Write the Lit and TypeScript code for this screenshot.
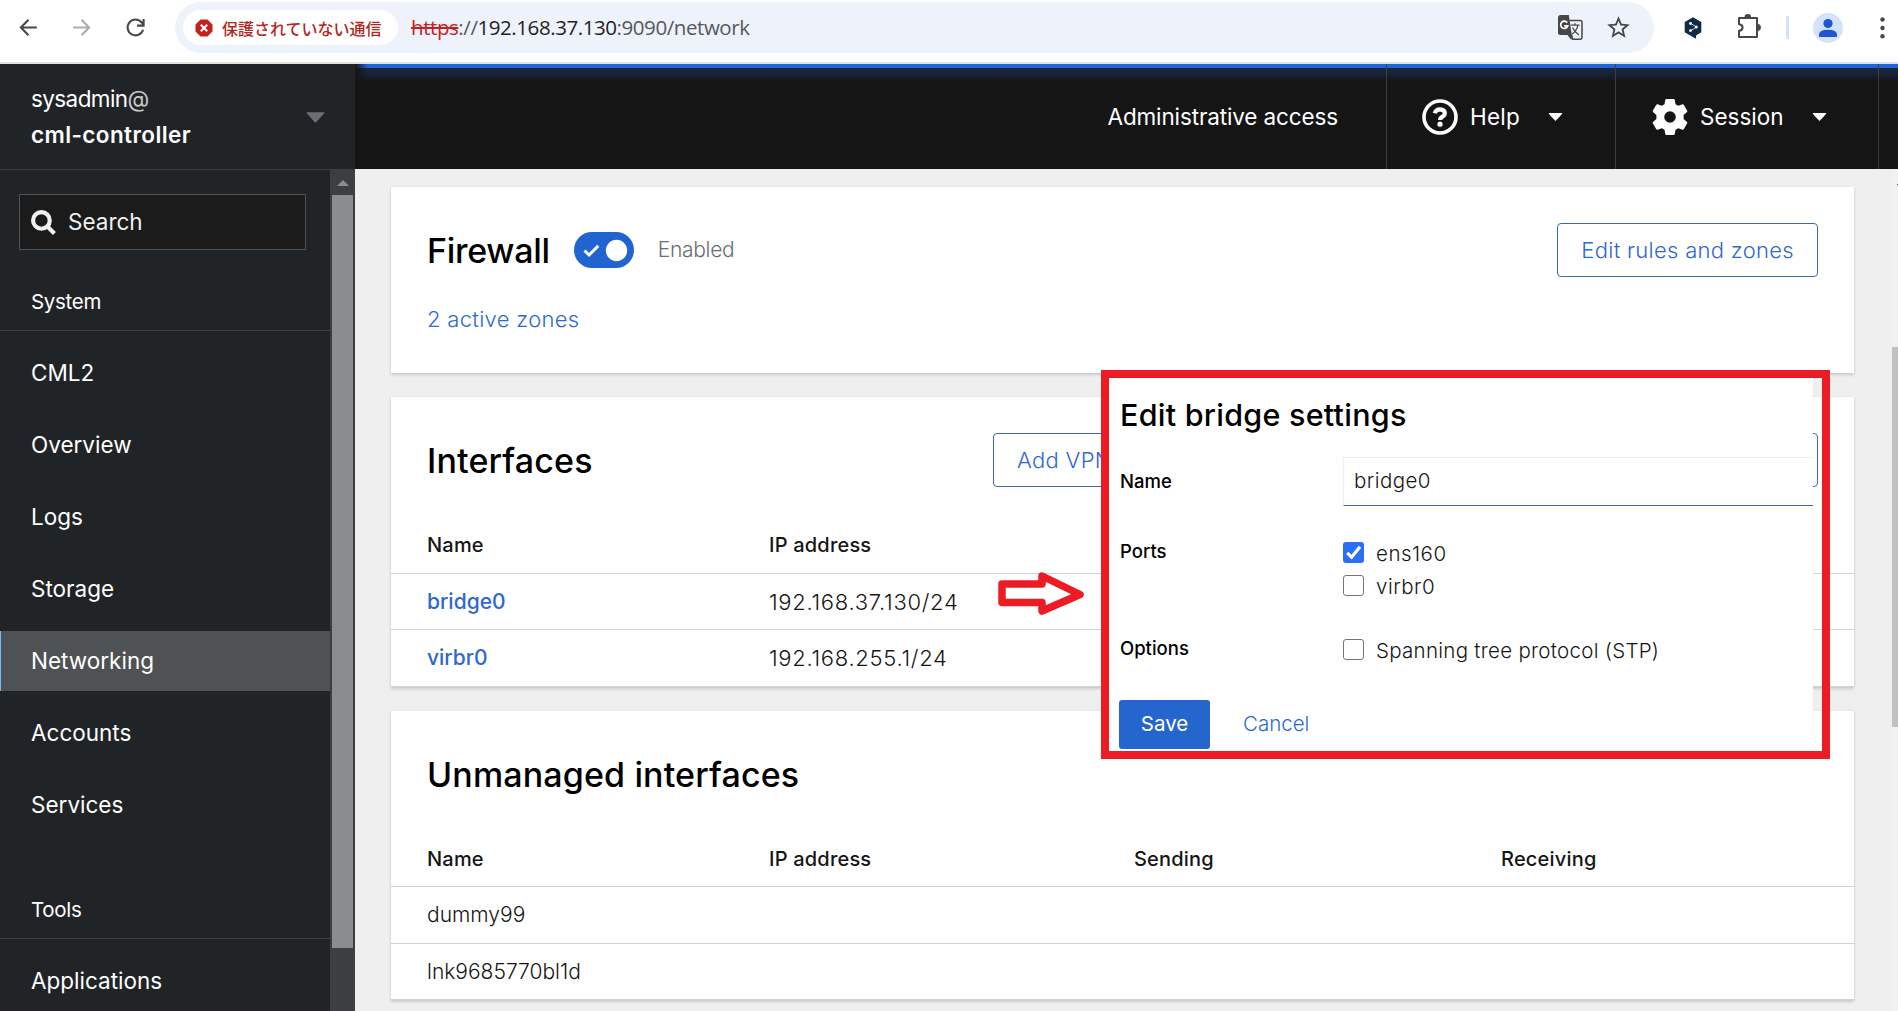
import { LitElement, css, html, svg } from 'lit';
import { customElement, property } from 'lit/decorators.js';
import { classMap } from 'lit/directives/class-map.js';


const caret = svg`<svg class="caret" viewBox="0 0 16 9"><path fill="currentColor" d="M1 0h14q1 0 .4 1L8.6 8.4q-.6.6-1.200 0L.6 1Q0 0 1 0z"/></svg>`;

@customElement( 'browser-bar' )
export class BrowserBar extends LitElement {
   render() {
      return html`
      <svg class="nav back" viewBox="0 0 24 24"><path d="M20 12H5M12 4.500 4.700 12l7.300 7.500"/></svg>
      <svg class="nav forward" viewBox="0 0 24 24"><path d="M4 12h15M12 4.500l7.300 7.500-7.300 7.500"/></svg>
      <svg class="nav reload" viewBox="0 0 24 24"><path d="M19.300 14.200A7.600 7.600 0 1 1 18 7.200l1.500 2.300M19.800 3.800v6.400h-6.400"/></svg>
      <div class="address">
        <div class="chip">
          <svg viewBox="0 0 18 18" width="18" height="18">
            <path fill="#c5221f" d="M5.600.500h6.800l5.100 5.100v6.800l-5.100 5.100H5.600L.500 12.400V5.600z"/>
            <path stroke="#fff" stroke-width="2" d="M5.800 5.800l6.400 6.400M12.200 5.800l-6.400 6.400"/>
          </svg>
          <span>保護されていない通信</span>
        </div>
        <div class="url"><s>https</s>://<b>192.168.37.130</b>:9090/network</div>
        <svg class="translate" viewBox="0 0 26 26">
          <path fill="#474747" d="M2.500 0h8.300l3 20H2.500Q0 20 0 17.500v-15Q0 0 2.500 0z"/>
          <path fill="none" stroke="#474747" stroke-width="1.500" d="M11.500 5.500h10.800q1.700 0 1.700 1.700v15.300q0 1.700-1.700 1.700h-7.500l-1.500-4.500"/>
          <path fill="#474747" d="M9.500 20h5l-1.200 5z"/>
          <path fill="none" stroke="#fff" stroke-width="1.700" d="M9.200 7.700a3.600 3.600 0 1 0 .5 3.200H6.200"/>
          <path fill="none" stroke="#474747" stroke-width="1.300" d="M12.700 10.200h8.800M17 8.200v2M20 10.200q-1.500 6-6 8.800M14.500 12.500q2 4.500 6.500 7.500"/>
        </svg>
        <svg class="star" viewBox="0 0 24 24"><path fill="#474747" d="M22 9.240l-7.190-.620L12 2 9.190 8.630 2 9.240l5.460 4.730L5.820 21 12 17.270 18.180 21l-1.630-7.030L22 9.240zM12 15.400l-3.760 2.270 1-4.280-3.320-2.880 4.380-.380L12 6.100l1.710 4.040 4.380.380-3.320 2.880 1 4.280L12 15.400z"/></svg>
      </div>
      <svg class="hex" viewBox="0 0 18 22">
        <path fill="#0f2b46" d="M9 .300 17.300 5v10.300L12 18.500v3.200L8 19.600.700 15.300V5z"/>
        <path fill="none" stroke="#fff" stroke-width=".8" d="M6.500 6.300l6 3.700-6 3.700"/>
        <circle cx="6.500" cy="6.500" r="1.400" fill="#fff"/><circle cx="12.300" cy="10" r="1.500" fill="#fff"/><circle cx="6.500" cy="13.600" r="1.400" fill="#fff"/>
      </svg>
      <svg class="puzzle" viewBox="0 0 24 25">
        <path fill="none" stroke="#474747" stroke-width="2" stroke-linejoin="round" d="M2 4h18v19H2v-6.200q3.600-.300 3.600-3.300T2 10.200z"/>
        <path fill="#474747" d="M7.500 3.300a3.300 3.300 0 0 1 6.600 0zM20.500 10.100a3.400 3.400 0 0 1 0 6.800z"/>
      </svg>
      <div class="divider"></div>
      <svg class="avatar" viewBox="0 0 30 30">
        <circle cx="15" cy="15" r="15" fill="#d3e3fd"/>
        <circle cx="15" cy="10.500" r="4.600" fill="#1f55cf"/>
        <path fill="#1f55cf" d="M6 24v-2.500q0-4.700 9-4.700t9 4.700V24z"/>
      </svg>
      <svg class="dots" viewBox="0 0 5 22"><g fill="#474747"><circle cx="2.500" cy="2.500" r="2.200"/><circle cx="2.500" cy="11" r="2.200"/><circle cx="2.500" cy="19.300" r="2.200"/></g></svg>
    `;
   }

   static styles = css`
  :host {
    display: flex;
    align-items: center;
    height: 64px;
    box-sizing: border-box;
    padding: 0 0 7px 16px;
    border-bottom: 2px solid #e2e4dc;
    background: #fff;
  }
  svg {
    flex: none;
  }
  .nav {
    width: 25px;
    height: 25px;
    fill: none;
    stroke: #474747;
    stroke-width: 2;
  }
  .forward {
    margin-left: 28px;
    stroke: #acacac;
  }
  .reload {
    margin-left: 29px;
  }
  .address {
    display: flex;
    align-items: center;
    width: 1479px;
    height: 51px;
    box-sizing: border-box;
    padding: 0 22px 0 8px;
    margin-left: 27px;
    border-radius: 26px;
    background: #eef2fb;
  }
  .chip {
    display: flex;
    align-items: center;
    gap: 9px;
    width: 215px;
    height: 35px;
    box-sizing: border-box;
    padding-left: 12px;
    border-radius: 18px;
    background: #fff;
    color: #b3261e;
    font: 500 16px/24px "Noto Sans CJK JP", sans-serif;
    white-space: nowrap;
  }
  .url {
    flex: 1;
    padding: 0 0 2px 13px;
    color: #55585c;
    font: 20.5px/30px "Open Sans", sans-serif;
    letter-spacing: -0.43px;
    white-space: nowrap;
  }
  .url s {
    color: #c5221f;
  }
  .url b {
    color: #1f1f1f;
    font-weight: 400;
  }
  .translate {
    width: 26px;
    height: 26px;
    margin-right: 21px;
  }
  .star {
    width: 27px;
    height: 27px;
  }
  .hex {
    width: 18px;
    height: 22px;
    margin-left: 30px;
  }
  .puzzle {
    width: 24px;
    height: 25px;
    margin: 0 0 3px 35px;
  }
  .divider {
    width: 3px;
    height: 23px;
    margin-left: 25px;
    background: #d3e3fd;
  }
  .avatar {
    width: 30px;
    height: 30px;
    margin-left: 24px;
  }
  .dots {
    width: 5px;
    height: 22px;
    margin-left: 37px;
  }
  `;
}


@customElement( 'side-nav' )
export class SideNav extends LitElement {
   @property( { type: String } ) current = 'Networking';

   groups = [
      { title: 'System', items: [ 'CML2', 'Overview', 'Logs', 'Storage', 'Networking', 'Accounts', 'Services' ] },
      { title: 'Tools', items: [ 'Applications' ] }
   ];

   render() {
      return html`
      <div class="host">
        <div>
          <div class="user">sysadmin<span>@</span></div>
          <div class="machine">cml-controller</div>
        </div>
        ${ caret }
      </div>
      <div class="body">
        <div class="list">
          <div class="search">
            <svg viewBox="0 0 24 24"><circle cx="10" cy="10" r="8" /><path d="M16 16l6.500 6.500"/></svg>
            <span>Search</span>
          </div>
          ${ this.groups.map( group => html`
            <section>
              <h2>${ group.title }</h2>
              ${ group.items.map( item => html`
                <div class=${ classMap( { item: true, current: item === this.current } ) }>${ item }</div>
              ` ) }
            </section>
          ` ) }
        </div>
        <div class="scrollbar">
          <div class="up"></div>
          <div class="thumb"></div>
        </div>
      </div>
    `;
   }

   static styles = css`
  :host {
    display: flex;
    flex-direction: column;
    width: 355px;
    background: #212427;
    color: #fff;
    font: 22.5px/30px Inter, sans-serif;
  }
  .host {
    display: flex;
    align-items: center;
    justify-content: space-between;
    height: 106px;
    box-sizing: border-box;
    padding: 1px 30px 0 31px;
    border-bottom: 1px solid #3c3f42;
  }
  .user, .machine {
    line-height: 36px;
  }
  .user {
    letter-spacing: -0.6px;
  }
  .user span {
    color: #c8c9ca;
  }
  .machine {
    font-weight: 600;
    letter-spacing: 0.4px;
  }
  .caret {
    width: 19px;
    height: 11px;
    color: #6a6e73;
  }
  .body {
    display: flex;
    flex: 1;
    min-height: 0;
  }
  .list {
    width: 330px;
    overflow: hidden;
  }
  .search {
    display: flex;
    align-items: center;
    gap: 12px;
    width: 287px;
    height: 56px;
    box-sizing: border-box;
    margin: 24px 0 0 19px;
    padding-left: 11px;
    border: 1px solid #4f5255;
    background: #1b1b1b;
    color: #f0f0f0;
  }
  .search svg {
    width: 25px;
    height: 25px;
    fill: none;
    stroke: #f0f0f0;
    stroke-width: 4;
  }
  section {
    display: flex;
    flex-direction: column;
    gap: 12px;
  }
  h2 {
    height: 81px;
    box-sizing: border-box;
    margin: 0;
    padding: 37px 0 0 31px;
    border-bottom: 1px solid #3c3f42;
    font-size: 20.500px;
    font-weight: 400;
    letter-spacing: -0.3px;
  }
  section + section {
    margin-top: 23px;
  }
  .item {
    height: 60px;
    box-sizing: border-box;
    padding: 15px 0 0 31px;
  }
  .item.current {
    padding-left: 30px;
    border-left: 1px solid #73bcf7;
    background: #4f5255;
  }
  .scrollbar {
    width: 21px;
    padding: 0 2px;
    background: #3c3f42;
  }
  .up {
    width: 0;
    margin: 10px 5px 9px;
    border: 6px solid transparent;
    border-top: 0;
    border-bottom-color: #8a8d90;
  }
  .thumb {
    height: 753px;
    background: #8a8d90;
  }
  `;
}


@customElement( 'top-bar' )
export class TopBar extends LitElement {
   render() {
      return html`
      <div class="cell access">Administrative access</div>
      <div class="cell help">
        <svg class="icon" viewBox="0 0 36 36">
          <circle cx="18" cy="18" r="16" fill="none" stroke="#fff" stroke-width="3.600"/>
          <path fill="none" stroke="#fff" stroke-width="4.200" d="M12.800 14.300q1-4 5.200-4 4.800.2 4.800 3.900 0 2.200-2.600 3.600-2.200 1.200-2.200 3.200"/>
          <circle cx="18" cy="25.200" r="2.600" fill="#fff"/>
        </svg>
        <span>Help</span>
        ${ caret }
      </div>
      <div class="cell session">
        <svg class="icon" viewBox="0 0 36 36">
          <path fill="#fff" fill-rule="evenodd" d="M14.300 0h7.400q.8 0 1 .8l.8 4.400 2.800 1.600 4.200-1.500q.8-.2 1.200.4l3.500 6.100q.4.800-.2 1.300l-3.400 2.900v4l3.400 2.900q.6.500.2 1.300l-3.500 6.100q-.4.700-1.200.4l-4.200-1.500-2.800 1.600-.8 4.400q-.2.800-1 .8h-7.400q-.8 0-1-.8l-.8-4.400-2.800-1.600-4.200 1.500q-.8.300-1.200-.4l-3.500-6.100q-.4-.8.200-1.300l3.400-2.900v-4L1 13.100q-.6-.5-.2-1.300l3.500-6.100q.4-.6 1.200-.4l4.200 1.500 2.800-1.600.8-4.400q.2-.8 1-.8zM18 12.200a5.800 5.800 0 1 0 0 11.600 5.800 5.800 0 0 0 0-11.600z"/>
        </svg>
        <span>Session</span>
        ${ caret }
      </div>
    `;
   }

   static styles = css`
  :host {
    display: flex;
    justify-content: flex-end;
    height: 105px;
    box-sizing: border-box;
    padding-right: 19px;
    background:
      linear-gradient(to right, #151515, transparent) 0 0 / 13px 17px no-repeat,
      linear-gradient(#2065d8 0 4px, #192740 4px, #18202f 12px, #151515 17px);
    color: #fff;
    font: 22.5px/30px Inter, sans-serif;
  }
  .cell {
    display: flex;
    align-items: center;
    box-sizing: border-box;
    border-right: 1px solid #3c3f42;
  }
  .access {
    padding-right: 48px;
    letter-spacing: -0.13px;
  }
  .help {
    width: 229px;
    padding-left: 35px;
    letter-spacing: 0.2px;
  }
  .session {
    width: 263px;
    padding-left: 36px;
  }
  .icon {
    width: 36px;
    height: 36px;
    margin-right: 12px;
  }
  .caret {
    width: 15px;
    height: 8px;
    margin-left: 28px;
  }
  `;
}


@customElement( 'network-page' )
export class NetworkPage extends LitElement {
   interfaces = [
      { name: 'bridge0', ip: '192.168.37.130/24' },
      { name: 'virbr0', ip: '192.168.255.1/24' }
   ];
   unmanaged = [ 'dummy99', 'lnk9685770bl1d' ];

   render() {
      return html`
      <div class="card firewall">
        <div class="head">
          <h1>Firewall</h1>
          <svg class="switch" viewBox="0 0 60 36">
            <rect width="60" height="36" rx="18" fill="#2264cf"/>
            <path fill="none" stroke="#fff" stroke-width="3" d="M10.500 18.500l4.600 4.500 9.200-9.200"/>
            <circle cx="42.500" cy="18.500" r="10.700" fill="#fff"/>
          </svg>
          <span class="state">Enabled</span>
          <div class="actions"><div class="button">Edit rules and zones</div></div>
        </div>
        <div class="zones">2 active zones</div>
      </div>
      <div class="card">
        <div class="head">
          <h1>Interfaces</h1>
          <div class="actions wide">
            <div class="button">Add VPN</div>
            <div class="button">Add VLAN</div>
          </div>
        </div>
        <div class="row th"><span>Name</span><span>IP address</span></div>
        ${ this.interfaces.map( i => html`
          <div class="row"><span class="link">${ i.name }</span><span class="ip">${ i.ip }</span></div>
        ` ) }
      </div>
      <div class="card">
        <div class="head"><h1>Unmanaged interfaces</h1></div>
        <div class="row th"><span>Name</span><span>IP address</span><span>Sending</span><span>Receiving</span></div>
        ${ this.unmanaged.map( name => html`<div class="row"><span>${ name }</span></div>` ) }
      </div>
    `;
   }

   static styles = css`
  :host {
    display: flex;
    flex-direction: column;
    gap: 24px;
    box-sizing: border-box;
    width: 1537px;
    padding: 18px 38px 0 36px;
    background: #efefef;
    color: #151515;
    font: 300 21px/30px Inter, sans-serif;
  }
  .card {
    box-sizing: border-box;
    background: #fff;
    box-shadow: 0 2px 3px rgba(3,3,3,0.14), 0 0 3px rgba(3,3,3,0.06);
  }
  .firewall {
    height: 186px;
  }
  .head {
    display: flex;
    align-items: center;
    height: 120px;
    box-sizing: border-box;
    padding: 6px 36px 0;
  }
  h1 {
    margin: 0;
    padding-top: 2px;
    color: #000;
    font: 500 34px/44px Inter, sans-serif;
    letter-spacing: 0.14px;
  }
  .firewall h1 {
    letter-spacing: -0.3px;
  }
  .switch {
    width: 60px;
    height: 36px;
    margin: 0 24px;
  }
  .state {
    color: #6a6e73;
    letter-spacing: -0.3px;
  }
  .actions {
    display: flex;
    justify-content: space-between;
    margin-left: auto;
  }
  .wide {
    width: 825px;
  }
  .button {
    height: 54px;
    box-sizing: border-box;
    padding: 11px 23px;
    border: 1px solid #3f65b8;
    border-radius: 4px;
    color: #2f68d0;
    font-size: 22px;
    letter-spacing: 0.3px;
  }
  .zones {
    margin: -3px 0 0 36px;
    color: #2f68d0;
    font-size: 22px;
    letter-spacing: 0.3px;
  }
  .row {
    display: grid;
    grid-template-columns: 342px 365px 367px 1fr;
    align-items: center;
    height: 56.5px;
    box-sizing: border-box;
    padding: 1px 0 0 36px;
    border-bottom: 1px solid #d2d2d2;
  }
  .th {
    font-size: 20px;
    font-weight: 500;
    letter-spacing: 0.2px;
  }
  .link {
    color: #2f68d0;
    font-weight: 500;
  }
  .ip {
    font-size: 22px;
    letter-spacing: 0.7px;
  }
  `;
}


@customElement( 'bridge-dialog' )
export class BridgeDialog extends LitElement {
   check( label: string, checked = false ) {
      return html`
      <div class="check">
        <div class=${ classMap( { box: true, checked } ) }>
          ${ checked ? svg`<svg viewBox="0 0 20 20"><path d="M4 10.300l4.200 4.200 8-10"/></svg>` : '' }
        </div>
        <span>${ label }</span>
      </div>
    `;
   }

   render() {
      return html`
      <div class="panel">
        <h1>Edit bridge settings</h1>
        <div class="form">
          <label class="centered">Name</label>
          <div class="input">bridge0</div>
          <label>Ports</label>
          <div class="ports">${ this.check( 'ens160', true ) }${ this.check( 'virbr0' ) }</div>
          <label>Options</label>
          <div>${ this.check( 'Spanning tree protocol (STP)' ) }</div>
        </div>
        <div class="footer">
          <div class="save">Save</div>
          <div class="cancel">Cancel</div>
        </div>
      </div>
    `;
   }

   static styles = css`
  :host {
    display: block;
    box-sizing: border-box;
    width: 729px;
    height: 389px;
    border: 8px solid #ed1c24;
    color: #151515;
    font: 300 20.500px/30px Inter, sans-serif;
  }
  .panel {
    width: 704px;
    height: 373px;
    box-sizing: border-box;
    padding: 17px 0 0 11px;
    background: #fff;
  }
  h1 {
    margin: 0;
    color: #000;
    font: 500 30.500px/40px Inter, sans-serif;
    letter-spacing: 0.25px;
  }
  .form {
    display: grid;
    grid-template-columns: 223px 1fr;
    grid-template-rows: 79px 97px 67px;
    margin-top: 22px;
  }
  label {
    color: #000;
    font-size: 18.500px;
    font-weight: 500;
  }
  .centered {
    padding-top: 9px;
  }
  .input {
    height: 49px;
    box-sizing: border-box;
    padding: 8px 0 0 10px;
    border: 1px solid #efefef;
    border-right: 0;
    border-bottom: 1px solid #3f65b8;
    letter-spacing: 0.4px;
  }
  .check {
    display: flex;
    align-items: center;
    gap: 12px;
    height: 33px;
    letter-spacing: 0.28px;
  }
  .ports .check {
    letter-spacing: 0.5px;
  }
  .check span {
    padding-top: 2px;
  }
  .box {
    width: 21px;
    height: 21px;
    box-sizing: border-box;
    border: 1.500px solid #767676;
    border-radius: 3px;
  }
  .checked {
    border: 0;
    background: #2a6ff6;
  }
  .checked svg {
    display: block;
    fill: none;
    stroke: #fff;
    stroke-width: 3;
  }
  .footer {
    display: flex;
    align-items: center;
    gap: 33px;
    color: #2f68d0;
  }
  .save {
    width: 91px;
    height: 49px;
    margin-left: -1px;
    border-radius: 3px;
    background: #2566ce;
    color: #fff;
    font-weight: 400;
    line-height: 48px;
    text-align: center;
  }
  .cancel {
    padding-bottom: 2px;
  }
  `;
}


@customElement( 'app-root' )
export class AppRoot extends LitElement {
   render() {
      return html`
      <browser-bar></browser-bar>
      <div class="shell">
        <side-nav></side-nav>
        <main>
          <top-bar></top-bar>
          <div class="content">
            <network-page></network-page>
            <div class="scroll"><div class="tick"></div><div class="thumb"></div></div>
          </div>
        </main>
      </div>
      <svg class="arrow" viewBox="0 0 88 46"><path d="M5 14h40V6l38 18.500L45 41v-8.500H5z"/></svg>
      <bridge-dialog></bridge-dialog>
    `;
   }

   static styles = css`
  :host {
    position: relative;
    display: flex;
    flex-direction: column;
    width: 1898px;
    height: 1011px;
    overflow: hidden;
    background: #efefef;
  }
  .shell {
    display: flex;
    flex: 1;
    min-height: 0;
  }
  main {
    flex: 1;
  }
  .content {
    display: flex;
    height: 842px;
  }
  .scroll {
    width: 6px;
    background: #f1f1f1;
  }
  .tick {
    width: 1px;
    height: 1px;
    margin: 15px 0 162px 5px;
    background: #505050;
  }
  .thumb {
    height: 380px;
    background: #c1c1c1;
  }
  .arrow {
    position: absolute;
    left: 997px;
    top: 570px;
    width: 88px;
    height: 46px;
    fill: #fff;
    stroke: #ed1c24;
    stroke-width: 7.500;
    stroke-linejoin: round;
  }
  bridge-dialog {
    position: absolute;
    left: 1101px;
    top: 370px;
  }
  `;
}


declare global {
   interface HTMLElementTagNameMap {
      'app-root': AppRoot;
   }
};
